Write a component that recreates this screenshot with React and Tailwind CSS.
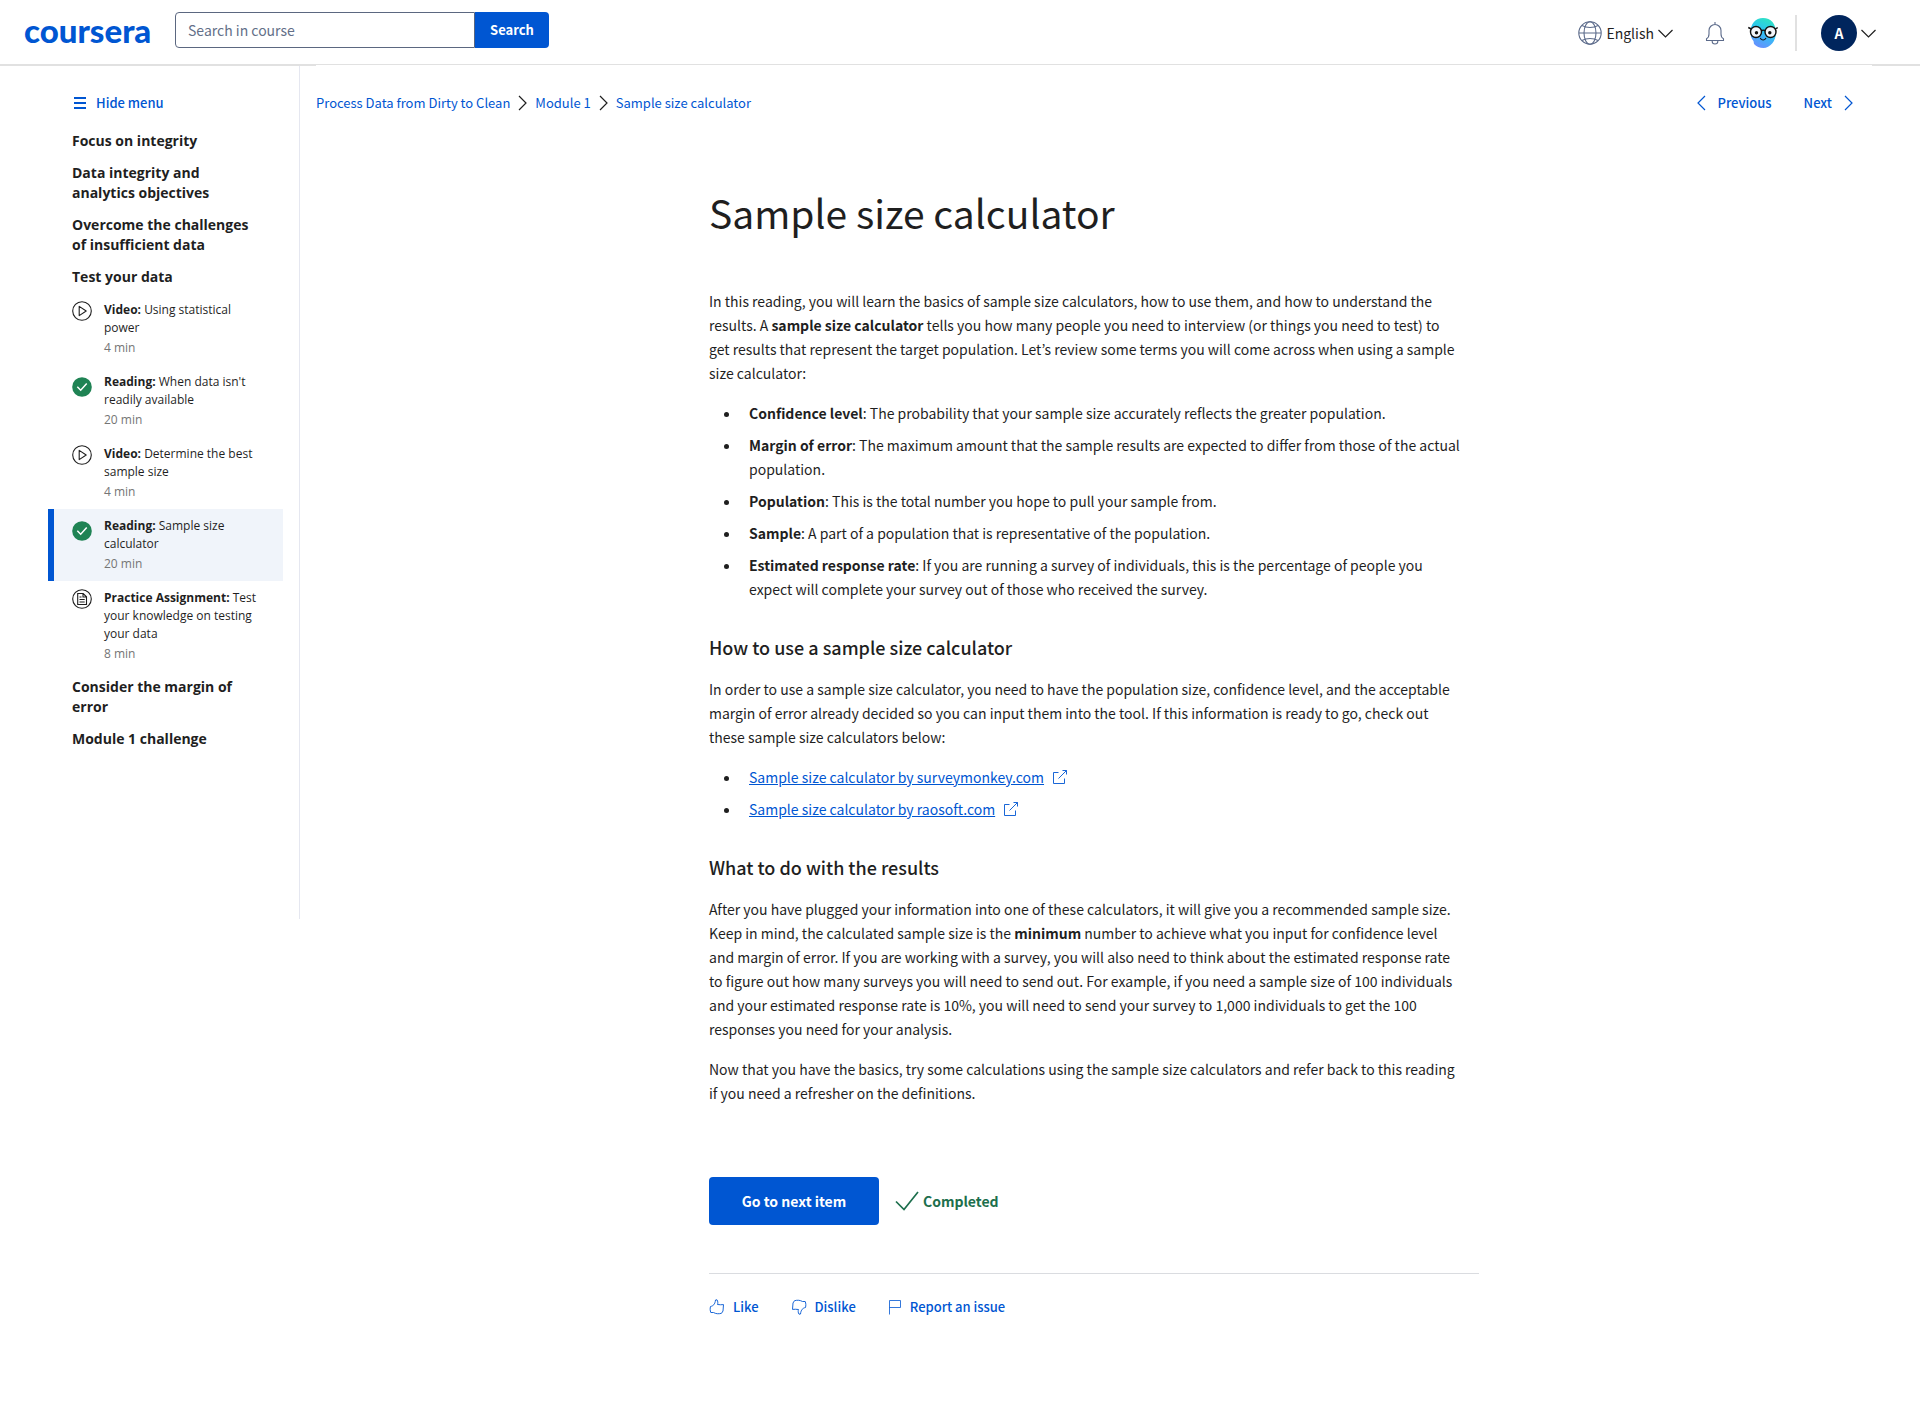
import React from "react";

const link = "text-[#0056d2]";

function Chevron({ dir, className }) {
  const d = { right: "M1 1l7 7-7 7", left: "M8 1L1 8l7 7" }[dir];
  return (
    <svg className={className} width="9" height="16" viewBox="0 0 9 16" fill="none" stroke="currentColor" strokeWidth="1.2" aria-hidden="true">
      <path d={d} />
    </svg>
  );
}

function ChevronDown() {
  return (
    <svg width="15" height="9" viewBox="0 0 15 9" fill="none" stroke="#1f1f1f" strokeWidth="1.2" aria-hidden="true">
      <path d="M.5 1l7 7 7-7" />
    </svg>
  );
}

function Globe() {
  return (
    <svg width="24" height="24" viewBox="0 0 24 24" fill="none" stroke="#5b6a8a" strokeWidth="1.1" aria-hidden="true">
      <circle cx="12" cy="12" r="11.2" />
      <ellipse cx="12" cy="12" rx="6" ry="11.2" />
      <path d="M1 12h22M4 4.500c4.500 2.600 11.500 2.600 16 0M4 19.500c4.500-2.600 11.500-2.600 16 0" />
    </svg>
  );
}

function Bell() {
  return (
    <svg width="20" height="24" viewBox="0 0 20 24" fill="none" stroke="#5b6a8a" strokeWidth="1.1" strokeLinejoin="round" aria-hidden="true">
      <path d="M10 1v2.500M1.500 19.500v-1.800c1.700-.8 2.500-2.600 2.500-4.700V9.500a6 6 0 0 1 12 0V13c0 2.100.8 3.900 2.500 4.700v1.800z" />
      <path d="M7.200 19.500v1a2.800 2.500 0 0 0 5.600 0v-1" />
    </svg>
  );
}

function Coach() {
  return (
    <svg width="30" height="30" viewBox="0 0 30 30" aria-hidden="true">
      <defs>
        <linearGradient id="coach" x1="0.7" y1="0" x2="0.3" y2="1">
          <stop offset="0" stopColor="#2fe3c2" />
          <stop offset="0.45" stopColor="#2bc4f3" />
          <stop offset="1" stopColor="#6a8dff" />
        </linearGradient>
      </defs>
      <path d="M15 0c8 0 13 6 13 14.500C28 23 22 30 15.500 30c-4 0-7-1.500-9.500-4l-.500-3C3.500 21 2.500 18 2.500 14 2.500 6 7.500 0 15 0z" fill="url(#coach)" />
      <g fill="#f3f6fb" stroke="#111" strokeWidth="1.400">
        <circle cx="8" cy="14" r="5.500" />
        <circle cx="22.500" cy="14" r="5.500" />
      </g>
      <path d="M13.400 12.800c.9-.9 2.700-.9 3.600 0M.3 9.500l3 1.500M29.700 9.500l-2.500 1.500" fill="none" stroke="#111" strokeWidth="1.400" />
      <circle cx="8.500" cy="14.800" r="1.700" fill="#111" />
      <circle cx="21.800" cy="14.800" r="1.700" fill="#111" />
      <path d="M12.500 20.500c1.200 2 4 2 5.200 0" fill="none" stroke="#111" strokeWidth="1.200" strokeLinecap="round" />
    </svg>
  );
}

function PlayIcon() {
  return (
    <svg width="20" height="20" viewBox="0 0 20 20" fill="none" stroke="#1f1f1f" strokeWidth="1.100" aria-hidden="true">
      <circle cx="10" cy="10" r="9.300" />
      <path d="M7.200 5.400v9.200l7-4.600z" strokeLinejoin="round" />
    </svg>
  );
}

function DoneIcon() {
  return (
    <svg width="20" height="20" viewBox="0 0 20 20" fill="none" aria-hidden="true">
      <circle cx="10" cy="10" r="9.800" fill="#1f8354" />
      <path d="M5.300 9.800l3.400 3.400 6-6.600" stroke="#fff" strokeWidth="1.500" />
    </svg>
  );
}

function AssignmentIcon() {
  return (
    <svg width="20" height="20" viewBox="0 0 20 20" fill="none" stroke="#1f1f1f" strokeWidth="1.100" aria-hidden="true">
      <circle cx="10" cy="10" r="9.300" />
      <path d="M5.700 4.500h5.500l3.300 3.300v7.700H5.700zM11 4.500V8h3.500M7.500 8h2M7.500 10.500h5.200M7.500 13h5.200" />
    </svg>
  );
}

function ExternalIcon() {
  return (
    <svg className="ml-2 inline-block align-[-2px]" width="16" height="16" viewBox="0 0 16 16" fill="none" stroke="#0056d2" strokeWidth="0.900" aria-hidden="true">
      <path d="M6.500 3.500H1.500v11h11V9.500M6.500 9.500L14.500 1.500M10.500 1.500h4v4" />
    </svg>
  );
}

function ThumbIcon({ down }) {
  return (
    <svg className={down ? "rotate-180" : ""} width="16" height="16" viewBox="0 0 16 16" fill="none" stroke="#0056d2" strokeWidth="0.900" strokeLinejoin="round" aria-hidden="true">
      <path d="M1.500 7.500C4 7 6 5.500 6.500 1L8 .8c1 1.700 1 3.200.5 4.700 2 .4 4 .2 6 .1l-.500 6.400-1.500 2.300c-3 .8-5.500.6-8-.8H1.800C1 11.500 1 9.500 1.500 7.500z" />
    </svg>
  );
}

function FlagIcon() {
  return (
    <svg width="14" height="16" viewBox="0 0 14 16" fill="none" stroke="#0056d2" strokeWidth="0.800" aria-hidden="true">
      <path d="M1.500 15.500V1.500h11v7h-11" />
    </svg>
  );
}

const lessons = [
  { kind: "Video:", title: "Using statistical power", time: "4 min", icon: "play" },
  { kind: "Reading:", title: "When data isn't readily available", time: "20 min", icon: "done" },
  { kind: "Video:", title: "Determine the best sample size", time: "4 min", icon: "play" },
  { kind: "Reading:", title: "Sample size calculator", time: "20 min", icon: "done", active: true },
  { kind: "Practice Assignment:", title: "Test your knowledge on testing your data", time: "8 min", icon: "doc" },
];

function Lesson({ item }) {
  return (
    <li>
      <a
        href="#lesson"
        aria-current={item.active ? "page" : undefined}
        className={
          "flex gap-3 border-l-[6px] pt-2 pr-5 pb-2 pl-[18px] text-xs leading-[18px] text-[#1f1f1f] " +
          (item.active ? "border-[#0056d2] bg-[#f0f4fa]" : "border-transparent")
        }
      >
        <span className={item.icon === "done" ? "mt-1 shrink-0" : "shrink-0"}>
          {item.icon === "play" && <PlayIcon />}
          {item.icon === "done" && <DoneIcon />}
          {item.icon === "doc" && <AssignmentIcon />}
        </span>
        <span>
          <span className="block">
            <strong>{item.kind}</strong> {item.title}
          </span>
          <span className="block pt-0.5 text-[#757575]">{item.time}</span>
        </span>
      </a>
    </li>
  );
}

function Section({ children }) {
  return <h2 className="py-1.5 pr-6 pl-6 text-sm leading-5 font-bold text-[#1f1f1f]">{children}</h2>;
}

function Header() {
  return (
    <header className="flex h-[66px] items-start justify-between border-b-2 border-[#e1e1e1] pr-11 pl-6">
      <div className="flex items-start gap-6 pt-3">
        <a href="#home" className="flex h-9 w-[127px] items-center font-['Lato'] text-[33px] leading-9 font-black text-[#0056d2]">
          coursera
        </a>
        <form className="flex" onSubmit={(e) => e.preventDefault()}>
          <input
            type="search"
            aria-label="Search in course"
            placeholder="Search in course"
            className="h-9 w-[300px] rounded-l border border-[#5b6780] px-3 text-sm text-[#1f1f1f] outline-none placeholder:text-[#636f88]"
          />
          <button className="h-9 w-[74px] rounded-r bg-[#0056d2] text-[13px] font-bold text-white">Search</button>
        </form>
      </div>
      <div className="flex items-center pt-[15px]">
        <button className="flex items-center gap-1 text-sm text-[#1f1f1f]">
          <Globe />
          <span>English</span>
          <ChevronDown />
        </button>
        <button aria-label="Notifications" className="ml-8">
          <Bell />
        </button>
        <button aria-label="Coach" className="ml-[23px]">
          <Coach />
        </button>
        <span className="ml-[17px] h-9 w-0.5 bg-[#e1e1e1]" />
        <button aria-label="Account" className="ml-6 flex items-center gap-1">
          <span className="flex size-9 items-center justify-center rounded-full bg-[#00255d] text-sm font-bold text-white">A</span>
          <ChevronDown />
        </button>
      </div>
    </header>
  );
}

function Sidebar() {
  return (
    <nav aria-label="Course" className="h-[853px] w-[300px] shrink-0 border-r border-[#e5e7f0] pt-6 pr-4 pl-12 font-['Open_Sans',sans-serif]">
      <button className={"mb-[9px] flex h-[26px] items-center gap-2.5 pl-[26px] font-['Noto_Sans_CJK_KR',sans-serif] text-[13px] font-medium " + link}>
        <svg width="12" height="12" viewBox="0 0 12 12" fill="currentColor" aria-hidden="true">
          <path d="M0 0h12v2H0zM0 5h12v2H0zM0 10h12v2H0z" />
        </svg>
        Hide menu
      </button>
      <Section>Focus on integrity</Section>
      <Section>Data integrity and analytics objectives</Section>
      <Section>Overcome the challenges of insufficient data</Section>
      <Section>Test your data</Section>
      <ul>
        {lessons.map((l) => (
          <Lesson key={l.kind + l.title} item={l} />
        ))}
      </ul>
      <Section>Consider the margin of error</Section>
      <Section>Module 1 challenge</Section>
    </nav>
  );
}

function Heading({ children }) {
  return <h2 className="mt-8 mb-4 text-lg leading-7 font-medium">{children}</h2>;
}

function Term({ name, children }) {
  return (
    <li className="pl-2">
      <strong>{name}</strong>: {children}
    </li>
  );
}

export default function App() {
  return (
    <div className="min-h-screen bg-white font-['Noto_Sans_CJK_KR',sans-serif] text-[#1f1f1f]">
      <Header />
      <div className="flex items-start">
        <Sidebar />
        <main className="relative z-10 -mt-px mr-12 ml-4 flex-1 bg-white pb-24">
          <div className="flex items-center justify-between pt-[26px] pr-[19px]">
            <nav aria-label="Breadcrumb" className={"flex items-center gap-2 text-[13px] leading-6 " + link}>
              <a href="#course">Process Data from Dirty to Clean</a>
              <Chevron dir="right" className="text-[#1f1f1f]" />
              <a href="#module">Module 1</a>
              <Chevron dir="right" className="text-[#1f1f1f]" />
              <a href="#item">Sample size calculator</a>
            </nav>
            <div className={"flex items-center gap-8 text-[13px] leading-6 font-medium " + link}>
              <a href="#previous" className="flex items-center gap-3">
                <Chevron dir="left" />
                Previous
              </a>
              <a href="#next" className="flex items-center gap-3">
                Next
                <Chevron dir="right" />
              </a>
            </div>
          </div>

          <article className="mx-auto max-w-[770px] pt-[72px] text-sm leading-6">
            <h1 className="text-[39px] leading-[50px] font-normal">Sample size calculator</h1>
            <div className="pt-[52px] pr-4">
              <p>
                In this reading, you will learn the basics of sample size calculators, how to use them, and how to understand the
                results. A <strong>sample size calculator</strong> tells you how many people you need to interview (or things you
                need to test) to get results that represent the target population. Let’s review some terms you will come across
                when using a sample size calculator:
              </p>
              <ul className="mt-4 list-disc space-y-2 pl-8">
                <Term name="Confidence level">The probability that your sample size accurately reflects the greater population.</Term>
                <Term name="Margin of error">
                  The maximum amount that the sample results are expected to differ from those of the actual population.
                </Term>
                <Term name="Population">This is the total number you hope to pull your sample from.</Term>
                <Term name="Sample">A part of a population that is representative of the population.</Term>
                <Term name="Estimated response rate">
                  If you are running a survey of individuals, this is the percentage of people you expect will complete your
                  survey out of those who received the survey.
                </Term>
              </ul>
              <Heading>How to use a sample size calculator</Heading>
              <p>
                In order to use a sample size calculator, you need to have the population size, confidence level, and the
                acceptable margin of error already decided so you can input them into the tool. If this information is ready to
                go, check out these sample size calculators below:
              </p>
              <ul className="mt-4 list-disc space-y-2 pl-8">
                <li className="pl-2">
                  <a href="#surveymonkey" className={link}>
                    <span className="underline">Sample size calculator by surveymonkey.com</span>
                    <ExternalIcon />
                  </a>
                </li>
                <li className="pl-2">
                  <a href="#raosoft" className={link}>
                    <span className="underline">Sample size calculator by raosoft.com</span>
                    <ExternalIcon />
                  </a>
                </li>
              </ul>
              <Heading>What to do with the results</Heading>
              <p>
                After you have plugged your information into one of these calculators, it will give you a recommended sample size.
                Keep in mind, the calculated sample size is the <strong>minimum</strong> number to achieve what you input for
                confidence level and margin of error. If you are working with a survey, you will also need to think about the
                estimated response rate to figure out how many surveys you will need to send out. For example, if you need a
                sample size of 100 individuals and your estimated response rate is 10%, you will need to send your survey to 1,000
                individuals to get the 100 responses you need for your analysis.
              </p>
              <p className="mt-4">
                Now that you have the basics, try some calculations using the sample size calculators and refer back to this
                reading if you need a refresher on the definitions.
              </p>
            </div>

            <div className="mt-[72px] flex items-center gap-4">
              <button className="h-12 w-[170px] rounded bg-[#0056d2] font-bold text-white">Go to next item</button>
              <span className="flex items-center gap-1 font-bold text-[#1d6f4d]">
                <svg width="24" height="20" viewBox="0 0 24 20" fill="none" stroke="currentColor" strokeWidth="1.700" aria-hidden="true">
                  <path d="M1 10.500l8 8L23 1" />
                </svg>
                Completed
              </span>
            </div>

            <div className={"mt-12 flex gap-8 border-t border-[#dadce0] pt-[21px] text-[13px] leading-6 font-medium " + link}>
              <button className="flex items-center gap-2">
                <ThumbIcon />
                Like
              </button>
              <button className="flex items-center gap-2">
                <ThumbIcon down />
                Dislike
              </button>
              <button className="flex items-center gap-2">
                <FlagIcon />
                Report an issue
              </button>
            </div>
          </article>
        </main>
      </div>
    </div>
  );
}
